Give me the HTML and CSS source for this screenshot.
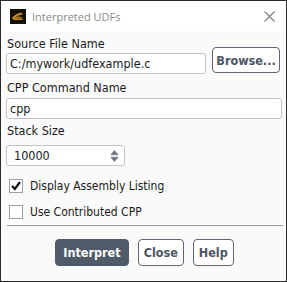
FILE: index.html
```html
<!DOCTYPE html>
<html>
<head>
<meta charset="utf-8">
<link rel="stylesheet" href="styles.css">
</head>
<body>
<div class="window">
  <div class="titlebar">
    <svg class="appicon" width="16" height="15" viewBox="0 0 16 15">
      <rect width="16" height="15" fill="#141008"/>
      <path d="M2 8.5 Q6 4.5 11 3.5 L13 5.5 Q9 5.5 7 7.5 L12 8.5 L13 10.5 Q8 11.5 3 10.5 Z" fill="#c8921c"/>
      <path d="M4 8.8 L12 9.6 M6 7.2 L11 7.8" stroke="#5a3e08" stroke-width="0.8"/>
    </svg>
    <span class="title">Interpreted UDFs</span>
    <svg class="close" width="11" height="11" viewBox="0 0 11 11">
      <path d="M0.5 0.5 L10.5 10.5 M10.5 0.5 L0.5 10.5" stroke="#7a7a7a" stroke-width="1.1"/>
    </svg>
  </div>
  <div class="body">
    <div class="toprow">
      <div class="col">
        <div class="label">Source File Name</div>
        <div class="field wide">C:/mywork/udfexample.c</div>
      </div>
      <div class="btn outline browse">Browse...</div>
    </div>
    <div class="label l2">CPP Command Name</div>
    <div class="field full">cpp</div>
    <div class="label l3">Stack Size</div>
    <div class="field spin">
      <span>10000</span>
      <svg class="arrows" width="9" height="14" viewBox="0 0 9 14">
        <path d="M0.8 5.8 L4.5 1.5 L8.2 5.8 Z" fill="#6b7480" stroke="#6b7480" stroke-width="0.6" stroke-linejoin="round"/>
        <path d="M0.8 8.2 L4.5 12.5 L8.2 8.2 Z" fill="#6b7480" stroke="#6b7480" stroke-width="0.6" stroke-linejoin="round"/>
      </svg>
    </div>
    <div class="check c1">
      <span class="box">
        <svg width="12" height="12" viewBox="0 0 12 12"><path d="M2 6 L4.8 9 L10 2" stroke="#111" stroke-width="2.2" fill="none"/></svg>
      </span>
      <span>Display Assembly Listing</span>
    </div>
    <div class="check c2">
      <span class="box"></span>
      <span>Use Contributed CPP</span>
    </div>
    <div class="sep"></div>
    <div class="buttons">
      <div class="btn primary interpret">Interpret</div>
      <div class="btn outline">Close</div>
      <div class="btn outline">Help</div>
    </div>
  </div>
</div>
</body>
</html>
```
FILE: styles.css
```css
html, body { margin: 0; padding: 0; }
body {
  width: 287px; height: 282px; overflow: hidden;
  font-family: "DejaVu Sans Condensed", "DejaVu Sans", sans-serif;
  font-size: 12px; color: #1b1b1b;
}
.window {
  box-sizing: border-box; width: 287px; height: 282px;
  border: 1px solid #2a2a2a; background: #fafafa;
  display: flex; flex-direction: column;
}
.titlebar {
  flex: none; height: 30px; background: #fff; display: flex; align-items: center;
  padding: 0 10px 0 9px;
}
.appicon { flex: none; }
.title { margin-left: 6px; color: #8a8a8a; font-family: "Open Sans", "Noto Sans", sans-serif; font-size: 11px; flex: 1; }
.close { flex: none; margin-right: 1px; }
.body { padding: 5px 5px 0 5px; display: flex; flex-direction: column; }
.toprow { display: flex; align-items: flex-end; gap: 6px; }
.col { display: flex; flex-direction: column; }
.label { height: 16px; line-height: 16px; padding-left: 1px; font-size: 12.5px; }
.field {
  box-sizing: border-box; height: 21px; background: #fff;
  border: 1px solid #bcc3cc; border-radius: 3px;
  padding: 0 3px; line-height: 19px; font-size: 12.5px;
}
.wide { width: 200px; margin-top: 1px; }
.l2 { margin-top: 6px; }
.full { width: 276px; margin-top: 2px; }
.l3 { margin-top: 4px; }
.spin { width: 119px; display: flex; justify-content: space-between; align-items: center; padding: 0 5px 0 7px; margin-top: 6px; }
.arrows { flex: none; }
.btn {
  box-sizing: border-box; border-radius: 4px; font-weight: bold;
  display: flex; align-items: center; justify-content: center;
  font-family: "DejaVu Sans Condensed", "DejaVu Sans", sans-serif; font-size: 12.5px;
}
.outline { border: 1px solid #5d6673; color: #4c5563; background: #fff; }
.browse { width: 68px; height: 26px; margin-bottom: 1px; }
.primary { background: #505b69; color: #fff; border: 1px solid #505b69; }
.check { display: flex; align-items: center; height: 14px; padding-left: 3px; }
.c1 { margin-top: 13px; }
.c2 { margin-top: 12px; }
.check .box {
  box-sizing: border-box; width: 14px; height: 14px; border: 1px solid #9aa1aa; background: #fff;
  margin-right: 7px; display: flex; align-items: center; justify-content: center;
}
.sep { height: 1px; background: #9a9a9a; margin: 6px 0 0 1px; width: 276px; }
.buttons { display: flex; justify-content: center; gap: 9px; margin-top: 13px; padding-left: 2px; }
.buttons .btn { height: 27px; padding: 0 5px; }
.buttons .interpret { padding: 0 7px; }
```
